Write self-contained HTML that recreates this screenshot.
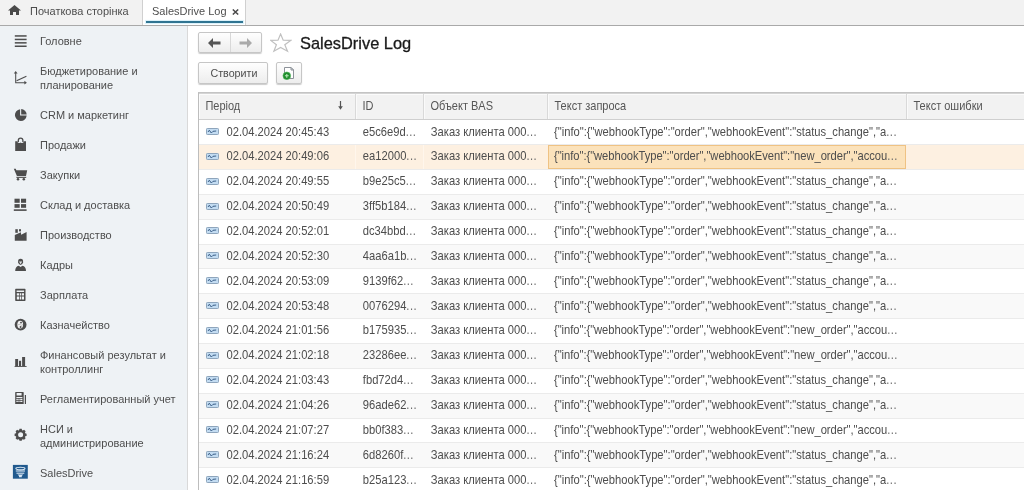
<!DOCTYPE html>
<html><head><meta charset="utf-8">
<style>
*{box-sizing:border-box;margin:0;padding:0}
html,body{width:1024px;height:490px;overflow:hidden;background:#fff}
body{position:relative;font-family:"Liberation Sans",sans-serif;font-size:11px;color:#4d4d4d}
.a{position:absolute}
svg{position:absolute;display:block}
#tabs{left:0;top:0;width:1024px;height:26px;background:#f2f2f2;border-bottom:1px solid #a9a9a9}
#tab2{left:142px;top:0;width:104px;height:25px;background:#fff;border-left:1px solid #d0d0d0;border-right:1px solid #d0d0d0}
#side{left:0;top:26px;width:188px;height:464px;background:#eef2f5;border-right:1px solid #d9d9d9}
.t{position:absolute;line-height:12.9px;white-space:nowrap;color:#4d4d4d;transform:scaleY(1.06);transform-origin:0 10px}
#main{left:188px;top:26px;width:836px;height:464px;background:#fff}
.btn{position:absolute;background:linear-gradient(#fefefe,#ededed);border:1px solid #c6c6c6;border-radius:2px;box-shadow:0 1px 1px rgba(0,0,0,.2)}
#grid{left:198px;top:92px;width:826px;height:398px;border-left:1px solid #bdbdbd;border-top:1px solid #c4c4c4}
#hdr{left:199px;top:93px;width:825px;height:27px;background:#f2f2f2;border-top:1px solid #d4d4d4;border-bottom:1px solid #cfcfcf;box-shadow:inset 1px 1px 0 #fbfbfb}
.hc{position:absolute;top:100px;line-height:12.4px;transform:scaleY(1.08);transform-origin:0 10px;white-space:nowrap;color:#565656}
.hd{position:absolute;top:94px;width:1px;height:25px;background:#d9d9d9;box-shadow:1px 0 0 #fafafa}
.row{position:absolute;left:199px;width:825px;height:24.85px;border-bottom:1px solid #ebebeb}
.row.g{background:#f9f9f9}
.row.s{background:#fdf0e1}
.c{position:absolute;top:-0.8px;line-height:24px;white-space:nowrap;font-size:11.2px}
.c i{font-style:normal;letter-spacing:0.45px;color:#6a6a6a}
.ri{left:7px;top:7.6px}
.selcell{position:absolute;left:349px;top:0;width:358px;height:24px;background:#fbe2bb;border:1px solid #efc283}
#wrap{position:absolute;left:0;top:0;width:1024px;height:490px;will-change:transform}

.no{font-weight:normal;letter-spacing:-0.045px}
.c{transform:scaleY(1.11);transform-origin:0 15px}
.sv{position:absolute;top:0;width:1px;height:24px;background:#fff6ec}

</style></head><body>
<div id="wrap"><div id="tabs" class="a"></div>
<svg style="left:8px;top:5px" width="13" height="10" viewBox="0 0 13 10"><path d="M6.5 0 L13 5.5 L11 5.5 L11 10 L8 10 L8 7 L5 7 L5 10 L2 10 L2 5.5 L0 5.5 Z" fill="#4a4a4a"/></svg>
<div class="t" style="left:30px;top:5.4px">Початкова сторінка</div>
<div id="tab2" class="a"></div>
<div class="t" style="left:152px;top:5.4px;color:#4d4d4d">SalesDrive Log</div>
<svg style="left:232px;top:9px" width="7" height="6" viewBox="0 0 7 6"><path d="M0.8 0.5 L6.2 5.5 M6.2 0.5 L0.8 5.5" stroke="#4a4a4a" stroke-width="1.5"/></svg>
<div class="a" style="left:146px;top:21px;width:97px;height:2px;background:#2f7492;box-shadow:0 0 1px 1px #d9f1fa"></div>

<div id="side" class="a"></div>

<svg style="left:0;top:26px" width="40" height="464" viewBox="0 26 40 464">
<g fill="#4d4d4d">
<!-- menu -->
<rect x="14.8" y="35.2" width="11.8" height="1.5"/><rect x="14.8" y="38.7" width="11.8" height="1.5"/><rect x="14.8" y="42.1" width="11.8" height="1.5"/><rect x="14.8" y="45.5" width="11.8" height="1.5"/>
<!-- pie -->
<path d="M20.1 109.2 A5.9 5.9 0 1 0 26.7 115.6 L20.1 115.6 Z"/>
<path d="M21.2 109.1 A5.8 5.8 0 0 1 26.7 114.6 L21.2 114.6 Z"/>
<!-- bag -->
<path d="M15.2 141.2 L17.6 141.2 L17.6 142.2 Q18.8 143.6 20.6 142.4 Q22.4 143.6 23.6 142.2 L23.6 141.2 L26 141.2 L26 151 L15.2 151 Z"/>
<path d="M18.3 142 L18.3 140.6 Q18.3 138.2 20.6 138.2 Q22.9 138.2 22.9 140.6 L22.9 142" fill="none" stroke="#4d4d4d" stroke-width="1.3"/>
<!-- cart -->
<path d="M13.8 168.8 L15.8 168.8 L16.3 170.3 L27.2 170.3 L26 176 L16.9 176 Z"/>
<rect x="16.4" y="176.8" width="9.8" height="1.1"/>
<circle cx="18" cy="179.3" r="1.25"/><circle cx="23.8" cy="179.3" r="1.25"/>
<!-- grid -->
<rect x="14.5" y="198.7" width="5.2" height="4.1"/><rect x="21" y="198.7" width="5.1" height="4.1"/>
<rect x="14.5" y="204.1" width="5.2" height="3.7"/><rect x="21" y="204.1" width="5.1" height="3.7"/>
<rect x="13.8" y="209.3" width="12.8" height="1.6"/>
<!-- factory -->
<rect x="15.3" y="229.2" width="2.5" height="3.6"/><rect x="19" y="229.2" width="2" height="2.2"/>
<path d="M14.8 240.8 L14.8 235 L20.9 232.3 L21.1 234.7 L26.6 232.1 L26.6 240.8 Z"/>
<!-- person -->
<path d="M18.1 262.2 Q17.8 258.8 20.6 258.8 Q23.4 258.8 23.1 262.2 Q22.6 264.9 20.6 264.9 Q18.6 264.9 18.1 262.2 Z"/>
<path d="M15.2 270.9 Q15.2 266.6 18.8 265.8 L20.6 267 L22.4 265.8 Q26 266.6 26 270.9 Z"/>
<path d="M19 261.6 L22.2 261.6 L20.6 264.3 Z" fill="#dfe3e6"/>
<!-- calculator -->
<path d="M15.8 288.7 L24.9 288.7 Q25.5 288.7 25.5 289.3 L25.5 300.3 Q25.5 300.9 24.9 300.9 L15.8 300.9 Q15.2 300.9 15.2 300.3 L15.2 289.3 Q15.2 288.7 15.8 288.7 Z M16.6 290.6 L16.6 292.1 L24.1 292.1 L24.1 290.6 Z M16.8 293.3 L16.8 295.6 L19.2 295.6 L19.2 293.3 Z M19.9 293.3 L19.9 295.6 L21.2 295.6 L21.2 293.3 Z M21.9 293.3 L21.9 295.6 L24 295.6 L24 293.3 Z M16.8 296.6 L16.8 299.4 L19.2 299.4 L19.2 296.6 Z M19.9 296.6 L19.9 299.4 L21.2 299.4 L21.2 296.6 Z M21.9 296.6 L21.9 299.4 L24 299.4 L24 296.6 Z" fill-rule="evenodd"/>
<!-- treasury -->
<circle cx="20.6" cy="324.7" r="5.9"/>
<!-- bars -->
<rect x="15.2" y="359" width="2.9" height="7.2"/><rect x="19" y="360.8" width="2.1" height="5.4"/><rect x="22.1" y="357" width="3" height="9.2"/>
<rect x="14.6" y="366" width="12" height="0.9"/>
<!-- register -->
<path d="M15.8 392 L23.1 392 Q23.7 392 23.7 392.6 L23.7 404 L15.2 404 L15.2 392.6 Q15.2 392 15.8 392 Z M16.6 393.1 L16.6 395.6 L21.6 395.6 L21.6 393.1 Z M16.4 397 L16.4 397.9 L22.4 397.9 L22.4 397 Z M16.4 398.7 L16.4 399.9 L17.8 399.9 L17.8 398.7 Z M18.4 398.7 L18.4 399.9 L19.6 399.9 L19.6 398.7 Z M20.2 398.7 L20.2 399.9 L22.4 399.9 L22.4 398.7 Z M16.4 400.7 L16.4 401.9 L17.8 401.9 L17.8 400.7 Z M18.4 400.7 L18.4 401.9 L19.6 401.9 L19.6 400.7 Z M20.2 400.7 L20.2 401.9 L22.4 401.9 L22.4 400.7 Z" fill-rule="evenodd"/>
<rect x="24.8" y="395" width="1.2" height="9"/>
<!-- gear -->
<path d="M25.25 433.26 L26.60 433.71 L26.60 435.89 L25.25 436.34 L24.98 437.00 L25.62 438.27 L24.07 439.82 L22.80 439.18 L22.14 439.45 L21.69 440.80 L19.51 440.80 L19.06 439.45 L18.40 439.18 L17.13 439.82 L15.58 438.27 L16.22 437.00 L15.95 436.34 L14.60 435.89 L14.60 433.71 L15.95 433.26 L16.22 432.60 L15.58 431.33 L17.13 429.78 L18.40 430.42 L19.06 430.15 L19.51 428.80 L21.69 428.80 L22.14 430.15 L22.80 430.42 L24.07 429.78 L25.62 431.33 L24.98 432.60 Z M23.10 434.8 A2.5 2.5 0 1 0 18.10 434.8 A2.5 2.5 0 1 0 23.10 434.8 Z" fill-rule="evenodd"/>
</g>
<g stroke="#4d4d4d" fill="none">
<!-- axes -->
<path d="M15.7 73 L15.7 82.7 L25 82.7" stroke-width="1.05"/>
<path d="M16.6 80.8 L26.4 76.2" stroke-width="1.1"/>
</g>
<g fill="#4d4d4d">
<path d="M13.8 73.5 L15.7 70.9 L17.6 73.5 Z"/>
<path d="M24.4 80.8 L26.9 82.7 L24.4 84.6 Z"/>
</g>
<!-- treasury inner -->
<ellipse cx="20.2" cy="324.6" rx="2.9" ry="3.9" fill="#f2f2f2"/>
<path d="M17.4 325 Q19.5 323.8 20.4 324.8 Q21.4 325.8 23 324.6" fill="none" stroke="#a8a8a8" stroke-width="0.7"/>
<circle cx="21" cy="322.6" r="0.95" fill="#505050"/>
<circle cx="20.6" cy="327" r="0.95" fill="#505050"/>
<!-- calc white line -->
<!-- salesdrive -->
<rect x="12.9" y="464.9" width="14.9" height="13.8" fill="#215a8e"/>
<g fill="none" stroke="#d8e6f2">
<ellipse cx="20.4" cy="468.6" rx="4.6" ry="1.3" stroke-width="1.1"/>
<path d="M15.8 471 L25 471" stroke-width="1.1"/>
<path d="M16.5 473.2 L24.3 473.2" stroke-width="1.1"/>
</g>
<path d="M17.6 474.6 L23.2 474.6 L21.8 476 L21.8 477.2 L19 477.2 L19 476 Z" fill="#d8e6f2"/>
</svg>
<div class="t" style="left:40px;top:35.3px">Головне</div>
<div class="t" style="left:40px;top:65.3px">Бюджетирование и<br>планирование</div>
<div class="t" style="left:40px;top:109.3px">CRM и маркетинг</div>
<div class="t" style="left:40px;top:139.3px">Продажи</div>
<div class="t" style="left:40px;top:169.3px">Закупки</div>
<div class="t" style="left:40px;top:199.3px">Склад и доставка</div>
<div class="t" style="left:40px;top:229.3px">Производство</div>
<div class="t" style="left:40px;top:259.3px">Кадры</div>
<div class="t" style="left:40px;top:289.3px">Зарплата</div>
<div class="t" style="left:40px;top:319.3px">Казначейство</div>
<div class="t" style="left:40px;top:349.3px">Финансовый результат и<br>контроллинг</div>
<div class="t" style="left:40px;top:393.3px">Регламентированный учет</div>
<div class="t" style="left:40px;top:423.3px">НСИ и<br>администрирование</div>
<div class="t" style="left:40px;top:467.3px">SalesDrive</div>

<div id="main" class="a"></div>
<div class="btn" style="left:198px;top:32px;width:64px;height:21px"></div>
<div class="a" style="left:230px;top:33px;width:1px;height:19px;background:#d8d8d8"></div>
<svg style="left:208px;top:38px" width="13" height="10" viewBox="0 0 13 10"><path d="M0 5 L5 0 L5 3.5 L12.5 3.5 L12.5 6.5 L5 6.5 L5 10 Z" fill="#555"/></svg>
<svg style="left:239px;top:38px" width="13" height="10" viewBox="0 0 13 10"><path d="M13 5 L8 0 L8 3.5 L0.5 3.5 L0.5 6.5 L8 6.5 L8 10 Z" fill="#aaa"/></svg>
<svg style="left:270px;top:33px" width="22" height="20" viewBox="0 0 22 20"><path d="M10.6 1 L13.2 7.2 L20.7 7.4 L14.8 11.8 L17.5 18.2 L10.6 14.4 L3.9 18.2 L6.4 11.8 L0.7 7.4 L8 7.2 Z" fill="none" stroke="#c0c0c0" stroke-width="1.2"/></svg>
<div class="a" style="left:300px;top:33px;font-size:16.4px;line-height:20px;color:#1a1a1a;-webkit-text-stroke:0.3px #1a1a1a;white-space:nowrap">SalesDrive Log</div>

<div class="btn" style="left:198px;top:62px;width:70px;height:22px"></div>
<div class="t" style="left:210.5px;top:66.5px;color:#4d4d4d;font-size:10.7px">Створити</div>
<div class="btn" style="left:276px;top:62px;width:26px;height:22px"></div>
<svg style="left:282px;top:66px" width="14" height="14" viewBox="0 0 14 14"><path d="M2.5 1.5 L9 1.5 L11.5 4 L11.5 12.5 L2.5 12.5 Z" fill="#fff" stroke="#8d9299"/><path d="M9 1.5 L9 4 L11.5 4 Z" fill="#e4e8ee" stroke="#8d9299"/><circle cx="4.8" cy="9.8" r="3.85" fill="#1f8c2c" stroke="#57b863" stroke-width="0.6"/><path d="M4.8 7.9 L4.8 11.7 M2.9 9.8 L6.7 9.8" stroke="#b8eab8" stroke-width="1.1"/></svg>

<div id="grid" class="a"></div>
<div id="hdr" class="a"></div>
<div class="hc" style="left:205.4px">Період</div>
<svg style="left:337px;top:101px" width="7" height="9" viewBox="0 0 7 9"><path d="M3.5 0 L3.5 7" stroke="#555" stroke-width="1.2"/><path d="M1.2 5.2 L3.5 8.8 L5.8 5.2 Z" fill="#555"/></svg>
<div class="hd" style="left:355px"></div>
<div class="hc" style="left:362.5px">ID</div>
<div class="hd" style="left:423px"></div>
<div class="hc" style="left:430.5px">Объект BAS</div>
<div class="hd" style="left:547px"></div>
<div class="hc" style="left:554.5px">Текст запроса</div>
<div class="hd" style="left:906px"></div>
<div class="hc" style="left:913.5px">Текст ошибки</div>
<div class="row" style="top:120.4px"><svg class="ri" width="13" height="7" viewBox="0 0 13 7"><rect x="0.5" y="0.5" width="12" height="6" rx="0.8" fill="#c3dcf2" stroke="#8ea5bc"/><path d="M2 4 L3.3 2.2 L5.3 5 L7 3.3 L10.2 3" fill="none" stroke="#3b5f88" stroke-width="1"/></svg><span class="c" style="left:27.5px">02.04.2024 20:45:43</span><span class="c" style="left:163.8px">e5c6e9d<i>...</i></span><span class="c" style="left:231.8px">Заказ клиента 000<i>...</i></span><span class="c" style="left:355px">{"info":{"webhookType":"order","webhookEvent":"status_change","a<i>...</i></span></div>
<div class="row s" style="top:145.25px"><svg class="ri" width="13" height="7" viewBox="0 0 13 7"><rect x="0.5" y="0.5" width="12" height="6" rx="0.8" fill="#c3dcf2" stroke="#8ea5bc"/><path d="M2 4 L3.3 2.2 L5.3 5 L7 3.3 L10.2 3" fill="none" stroke="#3b5f88" stroke-width="1"/></svg><span class="c" style="left:27.5px">02.04.2024 20:49:06</span><span class="c" style="left:163.8px">ea12000<i>...</i></span><span class="c" style="left:231.8px">Заказ клиента 000<i>...</i></span><div class="sv" style="left:156px"></div><div class="sv" style="left:224px"></div><div class="selcell"></div><span class="c" style="left:355px"><b class="no">{"info":{"webhookType":"order","webhookEvent":"new_order","accou<i>...</i></b></span></div>
<div class="row" style="top:170.1px"><svg class="ri" width="13" height="7" viewBox="0 0 13 7"><rect x="0.5" y="0.5" width="12" height="6" rx="0.8" fill="#c3dcf2" stroke="#8ea5bc"/><path d="M2 4 L3.3 2.2 L5.3 5 L7 3.3 L10.2 3" fill="none" stroke="#3b5f88" stroke-width="1"/></svg><span class="c" style="left:27.5px">02.04.2024 20:49:55</span><span class="c" style="left:163.8px">b9e25c5<i>...</i></span><span class="c" style="left:231.8px">Заказ клиента 000<i>...</i></span><span class="c" style="left:355px">{"info":{"webhookType":"order","webhookEvent":"status_change","a<i>...</i></span></div>
<div class="row g" style="top:194.95px"><svg class="ri" width="13" height="7" viewBox="0 0 13 7"><rect x="0.5" y="0.5" width="12" height="6" rx="0.8" fill="#c3dcf2" stroke="#8ea5bc"/><path d="M2 4 L3.3 2.2 L5.3 5 L7 3.3 L10.2 3" fill="none" stroke="#3b5f88" stroke-width="1"/></svg><span class="c" style="left:27.5px">02.04.2024 20:50:49</span><span class="c" style="left:163.8px">3ff5b184<i>...</i></span><span class="c" style="left:231.8px">Заказ клиента 000<i>...</i></span><span class="c" style="left:355px">{"info":{"webhookType":"order","webhookEvent":"status_change","a<i>...</i></span></div>
<div class="row" style="top:219.8px"><svg class="ri" width="13" height="7" viewBox="0 0 13 7"><rect x="0.5" y="0.5" width="12" height="6" rx="0.8" fill="#c3dcf2" stroke="#8ea5bc"/><path d="M2 4 L3.3 2.2 L5.3 5 L7 3.3 L10.2 3" fill="none" stroke="#3b5f88" stroke-width="1"/></svg><span class="c" style="left:27.5px">02.04.2024 20:52:01</span><span class="c" style="left:163.8px">dc34bbd<i>...</i></span><span class="c" style="left:231.8px">Заказ клиента 000<i>...</i></span><span class="c" style="left:355px">{"info":{"webhookType":"order","webhookEvent":"status_change","a<i>...</i></span></div>
<div class="row g" style="top:244.65px"><svg class="ri" width="13" height="7" viewBox="0 0 13 7"><rect x="0.5" y="0.5" width="12" height="6" rx="0.8" fill="#c3dcf2" stroke="#8ea5bc"/><path d="M2 4 L3.3 2.2 L5.3 5 L7 3.3 L10.2 3" fill="none" stroke="#3b5f88" stroke-width="1"/></svg><span class="c" style="left:27.5px">02.04.2024 20:52:30</span><span class="c" style="left:163.8px">4aa6a1b<i>...</i></span><span class="c" style="left:231.8px">Заказ клиента 000<i>...</i></span><span class="c" style="left:355px">{"info":{"webhookType":"order","webhookEvent":"status_change","a<i>...</i></span></div>
<div class="row" style="top:269.5px"><svg class="ri" width="13" height="7" viewBox="0 0 13 7"><rect x="0.5" y="0.5" width="12" height="6" rx="0.8" fill="#c3dcf2" stroke="#8ea5bc"/><path d="M2 4 L3.3 2.2 L5.3 5 L7 3.3 L10.2 3" fill="none" stroke="#3b5f88" stroke-width="1"/></svg><span class="c" style="left:27.5px">02.04.2024 20:53:09</span><span class="c" style="left:163.8px">9139f62<i>...</i></span><span class="c" style="left:231.8px">Заказ клиента 000<i>...</i></span><span class="c" style="left:355px">{"info":{"webhookType":"order","webhookEvent":"status_change","a<i>...</i></span></div>
<div class="row g" style="top:294.35px"><svg class="ri" width="13" height="7" viewBox="0 0 13 7"><rect x="0.5" y="0.5" width="12" height="6" rx="0.8" fill="#c3dcf2" stroke="#8ea5bc"/><path d="M2 4 L3.3 2.2 L5.3 5 L7 3.3 L10.2 3" fill="none" stroke="#3b5f88" stroke-width="1"/></svg><span class="c" style="left:27.5px">02.04.2024 20:53:48</span><span class="c" style="left:163.8px">0076294<i>...</i></span><span class="c" style="left:231.8px">Заказ клиента 000<i>...</i></span><span class="c" style="left:355px">{"info":{"webhookType":"order","webhookEvent":"status_change","a<i>...</i></span></div>
<div class="row" style="top:319.2px"><svg class="ri" width="13" height="7" viewBox="0 0 13 7"><rect x="0.5" y="0.5" width="12" height="6" rx="0.8" fill="#c3dcf2" stroke="#8ea5bc"/><path d="M2 4 L3.3 2.2 L5.3 5 L7 3.3 L10.2 3" fill="none" stroke="#3b5f88" stroke-width="1"/></svg><span class="c" style="left:27.5px">02.04.2024 21:01:56</span><span class="c" style="left:163.8px">b175935<i>...</i></span><span class="c" style="left:231.8px">Заказ клиента 000<i>...</i></span><span class="c" style="left:355px"><b class="no">{"info":{"webhookType":"order","webhookEvent":"new_order","accou<i>...</i></b></span></div>
<div class="row g" style="top:344.05px"><svg class="ri" width="13" height="7" viewBox="0 0 13 7"><rect x="0.5" y="0.5" width="12" height="6" rx="0.8" fill="#c3dcf2" stroke="#8ea5bc"/><path d="M2 4 L3.3 2.2 L5.3 5 L7 3.3 L10.2 3" fill="none" stroke="#3b5f88" stroke-width="1"/></svg><span class="c" style="left:27.5px">02.04.2024 21:02:18</span><span class="c" style="left:163.8px">23286ee<i>...</i></span><span class="c" style="left:231.8px">Заказ клиента 000<i>...</i></span><span class="c" style="left:355px"><b class="no">{"info":{"webhookType":"order","webhookEvent":"new_order","accou<i>...</i></b></span></div>
<div class="row" style="top:368.9px"><svg class="ri" width="13" height="7" viewBox="0 0 13 7"><rect x="0.5" y="0.5" width="12" height="6" rx="0.8" fill="#c3dcf2" stroke="#8ea5bc"/><path d="M2 4 L3.3 2.2 L5.3 5 L7 3.3 L10.2 3" fill="none" stroke="#3b5f88" stroke-width="1"/></svg><span class="c" style="left:27.5px">02.04.2024 21:03:43</span><span class="c" style="left:163.8px">fbd72d4<i>...</i></span><span class="c" style="left:231.8px">Заказ клиента 000<i>...</i></span><span class="c" style="left:355px">{"info":{"webhookType":"order","webhookEvent":"status_change","a<i>...</i></span></div>
<div class="row g" style="top:393.75px"><svg class="ri" width="13" height="7" viewBox="0 0 13 7"><rect x="0.5" y="0.5" width="12" height="6" rx="0.8" fill="#c3dcf2" stroke="#8ea5bc"/><path d="M2 4 L3.3 2.2 L5.3 5 L7 3.3 L10.2 3" fill="none" stroke="#3b5f88" stroke-width="1"/></svg><span class="c" style="left:27.5px">02.04.2024 21:04:26</span><span class="c" style="left:163.8px">96ade62<i>...</i></span><span class="c" style="left:231.8px">Заказ клиента 000<i>...</i></span><span class="c" style="left:355px">{"info":{"webhookType":"order","webhookEvent":"status_change","a<i>...</i></span></div>
<div class="row" style="top:418.6px"><svg class="ri" width="13" height="7" viewBox="0 0 13 7"><rect x="0.5" y="0.5" width="12" height="6" rx="0.8" fill="#c3dcf2" stroke="#8ea5bc"/><path d="M2 4 L3.3 2.2 L5.3 5 L7 3.3 L10.2 3" fill="none" stroke="#3b5f88" stroke-width="1"/></svg><span class="c" style="left:27.5px">02.04.2024 21:07:27</span><span class="c" style="left:163.8px">bb0f383<i>...</i></span><span class="c" style="left:231.8px">Заказ клиента 000<i>...</i></span><span class="c" style="left:355px"><b class="no">{"info":{"webhookType":"order","webhookEvent":"new_order","accou<i>...</i></b></span></div>
<div class="row g" style="top:443.45px"><svg class="ri" width="13" height="7" viewBox="0 0 13 7"><rect x="0.5" y="0.5" width="12" height="6" rx="0.8" fill="#c3dcf2" stroke="#8ea5bc"/><path d="M2 4 L3.3 2.2 L5.3 5 L7 3.3 L10.2 3" fill="none" stroke="#3b5f88" stroke-width="1"/></svg><span class="c" style="left:27.5px">02.04.2024 21:16:24</span><span class="c" style="left:163.8px">6d8260f<i>...</i></span><span class="c" style="left:231.8px">Заказ клиента 000<i>...</i></span><span class="c" style="left:355px">{"info":{"webhookType":"order","webhookEvent":"status_change","a<i>...</i></span></div>
<div class="row" style="top:468.3px"><svg class="ri" width="13" height="7" viewBox="0 0 13 7"><rect x="0.5" y="0.5" width="12" height="6" rx="0.8" fill="#c3dcf2" stroke="#8ea5bc"/><path d="M2 4 L3.3 2.2 L5.3 5 L7 3.3 L10.2 3" fill="none" stroke="#3b5f88" stroke-width="1"/></svg><span class="c" style="left:27.5px">02.04.2024 21:16:59</span><span class="c" style="left:163.8px">b25a123<i>...</i></span><span class="c" style="left:231.8px">Заказ клиента 000<i>...</i></span><span class="c" style="left:355px">{"info":{"webhookType":"order","webhookEvent":"status_change","a<i>...</i></span></div>
</div></body></html>
